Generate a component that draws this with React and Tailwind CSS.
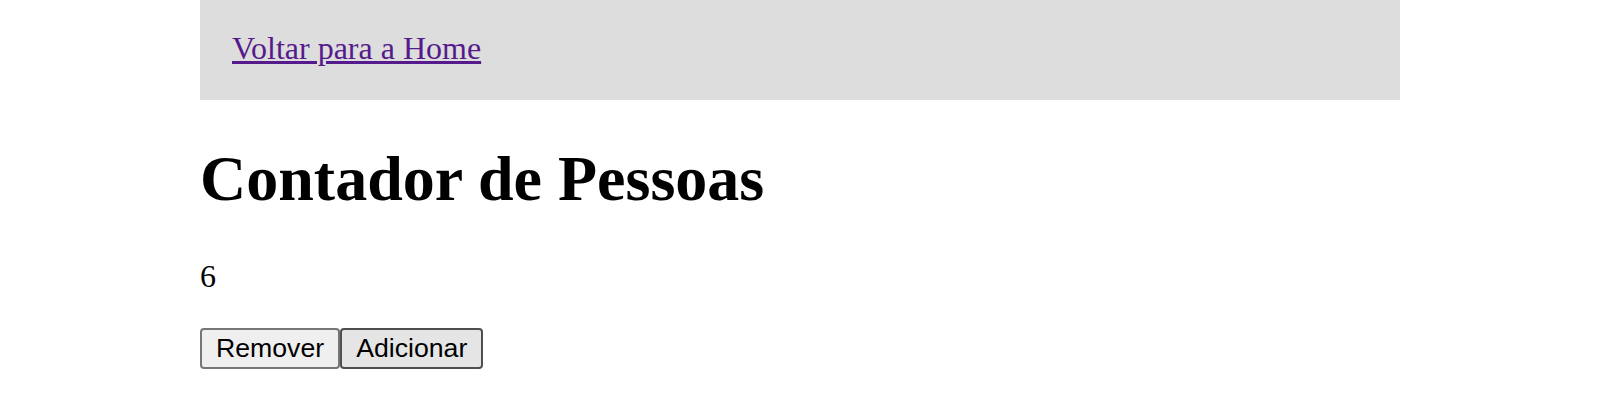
import React from "react";

export default function App() {
  return (
    <div className="w-[1200px] mx-auto font-['Liberation_Serif',serif] text-black leading-[normal]">
      <header className="bg-[#dddddd] px-8 pt-[30px] pb-[34px] text-[32px] leading-[36px]">
        <a href="#" className="text-[#551a8b] underline">
          Voltar para a Home
        </a>
      </header>
      <h1 className="text-[64px] font-bold mt-[42px] mb-[42px]">Contador de Pessoas</h1>
      <p className="text-[32px] mt-8 mb-[33px]">6</p>
      <div className="flex">
        <button className="font-['Liberation_Sans',sans-serif] text-[26.67px] leading-[normal] px-[14px] py-[3px] border-2 border-[#767676] rounded-[4px] bg-[#efefef] text-black">
          Remover
        </button>
        <button className="font-['Liberation_Sans',sans-serif] text-[26.67px] leading-[normal] px-[14px] py-[3px] border-2 border-[#4f4f4f] rounded-[4px] bg-[#e5e5e5] text-black">
          Adicionar
        </button>
      </div>
    </div>
  );
}
